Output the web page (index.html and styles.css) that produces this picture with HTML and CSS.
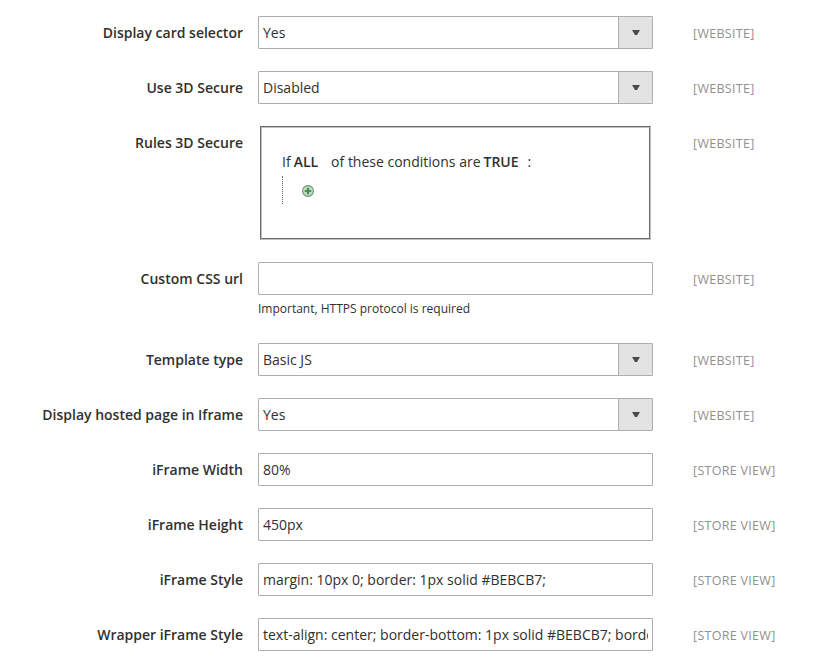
FILE: index.html
```html
<!DOCTYPE html>
<html lang="en">
<head>
<meta charset="utf-8">
<title>Configuration</title>
<link rel="stylesheet" href="styles.css">
</head>
<body>
<main class="form">
  <div class="row"><div class="label">Display card selector</div><div class="control select"><span class="value">Yes</span><span class="toggle"><svg class="caret" viewBox="0 0 8 5"><path d="M0 0h8L5 5H3z"/></svg></span></div><div class="scope">[WEBSITE]</div></div>
  <div class="row"><div class="label">Use 3D Secure</div><div class="control select"><span class="value">Disabled</span><span class="toggle"><svg class="caret" viewBox="0 0 8 5"><path d="M0 0h8L5 5H3z"/></svg></span></div><div class="scope">[WEBSITE]</div></div>
  <div class="row">
    <div class="label">Rules 3D Secure</div>
    <div class="rules">
      <div class="rule"><span>If</span><b class="all">ALL</b><span class="of">of these conditions are</span><b class="true">TRUE</b><span class="colon">:</span></div>
      <div class="children">
        <svg class="add" viewBox="0 0 12 12"><circle cx="6" cy="6" r="5.4" fill="#c3dbc4" stroke="#6c8f70" stroke-width="1.1"/><path d="M6 2.8v6.4M2.8 6h6.4" stroke="#3c9552" stroke-width="2.2"/></svg>
      </div>
    </div>
    <div class="scope">[WEBSITE]</div>
  </div>
  <div class="row"><div class="label">Custom CSS url</div><div class="field"><div class="control"></div><p class="note">Important, HTTPS protocol is required</p></div><div class="scope">[WEBSITE]</div></div>
  <div class="row"><div class="label">Template type</div><div class="control select"><span class="value">Basic JS</span><span class="toggle"><svg class="caret" viewBox="0 0 8 5"><path d="M0 0h8L5 5H3z"/></svg></span></div><div class="scope">[WEBSITE]</div></div>
  <div class="row"><div class="label">Display hosted page in Iframe</div><div class="control select"><span class="value">Yes</span><span class="toggle"><svg class="caret" viewBox="0 0 8 5"><path d="M0 0h8L5 5H3z"/></svg></span></div><div class="scope">[WEBSITE]</div></div>
  <div class="row"><div class="label">iFrame Width</div><div class="control"><span class="value">80%</span></div><div class="scope">[STORE VIEW]</div></div>
  <div class="row"><div class="label">iFrame Height</div><div class="control"><span class="value">450px</span></div><div class="scope">[STORE VIEW]</div></div>
  <div class="row"><div class="label">iFrame Style</div><div class="control"><span class="value">margin: 10px 0; border: 1px solid #BEBCB7;</span></div><div class="scope">[STORE VIEW]</div></div>
  <div class="row"><div class="label">Wrapper iFrame Style</div><div class="control"><span class="value">text-align: center; border-bottom: 1px solid #BEBCB7; border</span></div><div class="scope">[STORE VIEW]</div></div>
</main>
</body>
</html>
```
FILE: styles.css
```css
* { box-sizing: border-box; }
body {
  margin: 0;
  background: #fff;
  color: #303030;
  font: 14px/33px "Open Sans", sans-serif;
}
.form {
  display: flex;
  flex-direction: column;
  gap: 22px;
  padding-top: 16px;
}
.row {
  display: grid;
  grid-template-columns: 243px 395px 1fr;
  column-gap: 15px;
  align-items: start;
}
.label { font-weight: 600; text-align: right; white-space: nowrap; }
.control {
  display: flex;
  height: 33px;
  padding: 0 4px;
  border: 1px solid #adadad;
  border-radius: 1px;
  line-height: 31px;
}
.value { flex: 1; min-width: 0; overflow: hidden; white-space: nowrap; }
.select { padding-right: 0; }
.toggle {
  display: flex;
  align-items: center;
  justify-content: center;
  width: 34px;
  border-left: 1px solid #adadad;
  background: #e3e3e3;
}
.caret { width: 8px; height: 5px; fill: #514943; }
.scope {
  height: 33px;
  padding: 1px 0 0 25px;
  color: #909090;
  font-size: 12.5px;
  letter-spacing: 0.3px;
}
.note { margin: 3px 0 2px; font-size: 12px; line-height: 21px; }
.rules {
  width: 391px;
  height: 114px;
  margin-left: 2px;
  padding: 24px 20px 0;
  border: 2px groove #c0c0c0;
}
.rule { display: flex; height: 24px; line-height: 20px; white-space: nowrap; }
.rule b { font-weight: 600; }
.all { margin-left: 3px; }
.of { margin-left: 13px; }
.true { margin-left: 3px; }
.colon { margin-left: 9px; }
.children {
  height: 28px;
  padding: 9px 0 0 19px;
  border-left: 1px dotted #666;
  line-height: 0;
}
.add { width: 12px; height: 12px; }
```
